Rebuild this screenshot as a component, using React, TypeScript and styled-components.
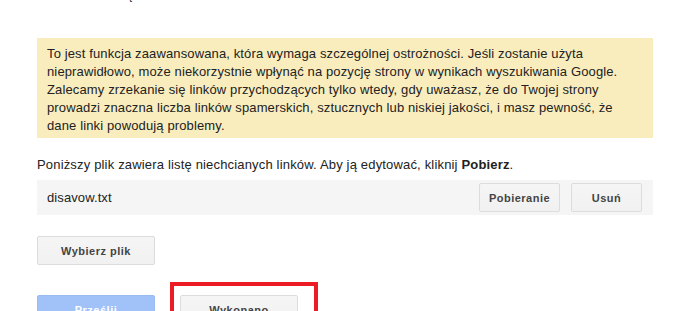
import React from "react";
import styled, { createGlobalStyle } from "styled-components";

const Global = createGlobalStyle`
  html, body { margin: 0; padding: 0; background: #fff; }
  body { font-family: Arial, "Liberation Sans", sans-serif; color: #222; overflow: hidden; }
`;

const Page = styled.div`
  width: 616px;
  padding-left: 37px;
  display: flex;
  flex-direction: column;
`;

const Heading = styled.div`
  height: 3px;
  overflow: hidden;
`;

const HeadingText = styled.div`
  font-size: 13px;
  line-height: 13px;
  margin-top: -12px;
  color: #222;
  padding-left: 20px;
`;

const Warning = styled.div`
  margin-top: 35px;
  background: #f9edbe;
  padding: 7px 10px 10px 10px;
  font-size: 13px;
  line-height: 18px;
  letter-spacing: 0.13px;
  color: #222;
  height: 83px;
  white-space: nowrap;
`;

const Intro = styled.p`
  margin: 18px 0 0 0;
  font-size: 13px;
  line-height: 18px;
  letter-spacing: 0.17px;
  color: #222;
  b { font-weight: bold; }
`;

const FileRow = styled.div`
  margin-top: 6px;
  background: #f5f5f5;
  height: 35px;
  display: flex;
  align-items: center;
  padding: 0 11px 0 10px;
  gap: 11px;
`;

const FileName = styled.span`
  flex: 1;
  font-size: 13px;
  letter-spacing: 0.1px;
  color: #222;
`;

const Button = styled.button<{ $w: number; $primary?: boolean }>`
  width: ${(p) => p.$w}px;
  height: 29px;
  box-sizing: border-box;
  border-radius: 2px;
  font-family: Arial, "Liberation Sans", sans-serif;
  font-size: 11px;
  font-weight: bold;
  letter-spacing: 0.5px;
  padding: 0 4px;
  cursor: default;
  color: ${(p) => (p.$primary ? "#fff" : "#444")};
  background: ${(p) => (p.$primary ? "#a0c2f9" : "linear-gradient(#f5f5f5, #f1f1f1)")};
  border: 1px solid ${(p) => (p.$primary ? "#99bbf0" : "#dcdcdc")};
`;

const Section = styled.div<{ $top: number }>`
  margin-top: ${(p) => p.$top}px;
  display: flex;
  align-items: flex-start;
  gap: 15px;
`;

const Highlight = styled.div`
  border: 4px solid #ed1c24;
  border-bottom: none;
  margin-top: -13px;
  padding: 9px 16px 0 6px;
`;

export default function App() {
  return (
    <>
      <Global />
      <Page>
        <Heading>
          <HeadingText>Zrzekanie się linków</HeadingText>
        </Heading>
        <Warning>
          To jest funkcja zaawansowana, która wymaga szczególnej ostrożności. Jeśli zostanie użyta
          <br />
          nieprawidłowo, może niekorzystnie wpłynąć na pozycję strony w wynikach wyszukiwania Google.
          <br />
          Zalecamy zrzekanie się linków przychodzących tylko wtedy, gdy uważasz, że do Twojej strony
          <br />
          prowadzi znaczna liczba linków spamerskich, sztucznych lub niskiej jakości, i masz pewność, że
          <br />
          dane linki powodują problemy.
        </Warning>
        <Intro>
          Poniższy plik zawiera listę niechcianych linków. Aby ją edytować, kliknij <b>Pobierz</b>.
        </Intro>
        <FileRow>
          <FileName>disavow.txt</FileName>
          <Button $w={81}>Pobieranie</Button>
          <Button $w={71}>Usuń</Button>
        </FileRow>
        <Section $top={21}>
          <Button $w={118}>Wybierz plik</Button>
        </Section>
        <Section $top={30}>
          <Button $w={118} $primary>Prześlij</Button>
          <Highlight>
            <Button $w={118}>Wykonano</Button>
          </Highlight>
        </Section>
      </Page>
    </>
  );
}
